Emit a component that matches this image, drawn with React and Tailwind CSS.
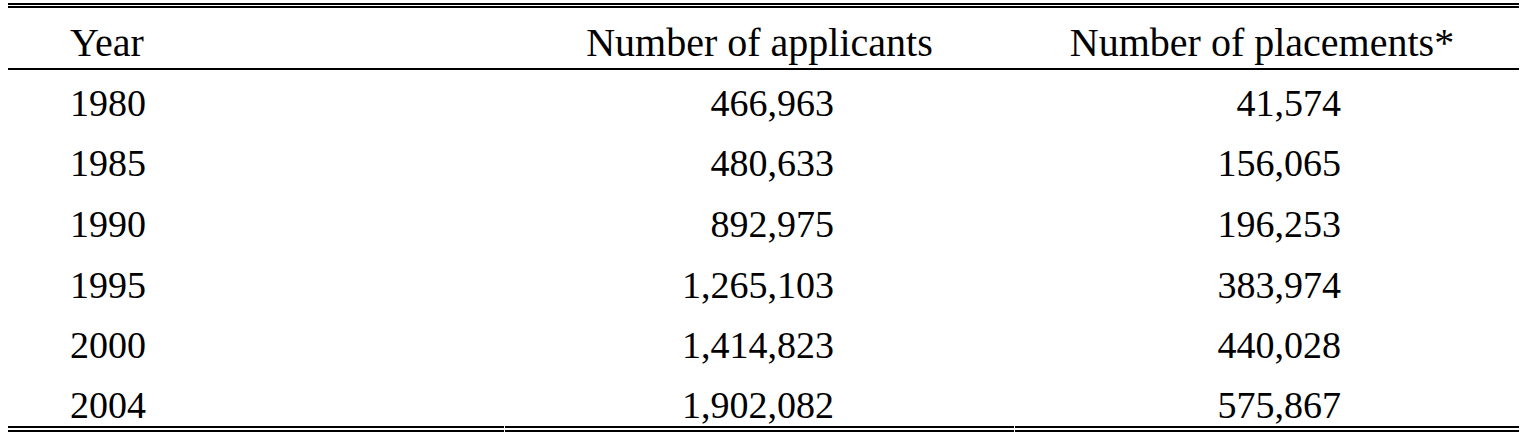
import React from 'react';

const rows = [
  ['1980', '466,963', '41,574'],
  ['1985', '480,633', '156,065'],
  ['1990', '892,975', '196,253'],
  ['1995', '1,265,103', '383,974'],
  ['2000', '1,414,823', '440,028'],
  ['2004', '1,902,082', '575,867'],
];

const App = () => {
  return (
    <div className="w-[1532px] h-[436px] overflow-hidden bg-white pt-[3px] pl-[8px] font-['Liberation_Serif',serif] text-[38px] text-black">
      <div className="w-[1511px] border-t-[5px] border-double border-black">
        <div className="grid grid-cols-[496px_509px_504px] gap-x-px">
          {/* Header */}
          <div className="h-[60px] flex items-center pt-[10px] pl-[62px] text-[40px]">Year</div>
          <div className="h-[60px] flex items-center justify-center pt-[10px] text-[40px]">Number of applicants</div>
          <div className="h-[60px] flex items-center justify-center pt-[10px] pr-[10px] text-[40px]">Number of placements*</div>
          <div className="col-span-3 h-[2px] bg-black"></div>

          {/* Rows */}
          {rows.map((r, i) => {
            const last = i === rows.length - 1;
            const cell = last
              ? 'h-[59px] pt-[12px] border-b-[6px] border-double border-black'
              : 'h-[60.6px] pt-[6px]';
            return (
              <React.Fragment key={r[0]}>
                <div className={`${cell} flex items-center pl-[62px]`}>{r[0]}</div>
                <div className={`${cell} flex items-center justify-end pr-[180px]`}>{r[1]}</div>
                <div className={`${cell} flex items-center justify-end pr-[178px]`}>{r[2]}</div>
              </React.Fragment>
            );
          })}
        </div>
      </div>
    </div>
  );
};

export default App;
